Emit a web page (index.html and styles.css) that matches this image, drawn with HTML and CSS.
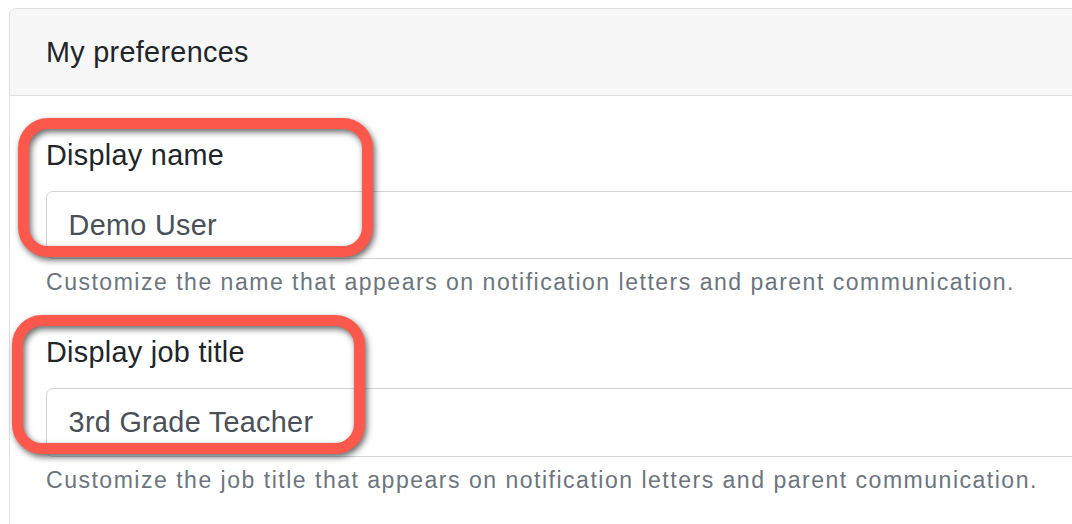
FILE: index.html
```html
<!DOCTYPE html>
<html lang="en">
<head>
<meta charset="utf-8">
<title>My preferences</title>
<link rel="stylesheet" href="styles.css">
</head>
<body>
<div class="page">
  <div class="card">
    <div class="card-header">My preferences</div>
    <div class="card-body">
      <div class="form-group">
        <label class="form-label" for="name">Display name</label>
        <input class="form-control" id="name" type="text" value="Demo User">
        <small class="form-text">Customize the name that appears on notification letters and parent communication.</small>
      </div>
      <div class="form-group">
        <label class="form-label" for="title">Display job title</label>
        <input class="form-control" id="title" type="text" value="3rd Grade Teacher">
        <small class="form-text">Customize the job title that appears on notification letters and parent communication.</small>
      </div>
    </div>
  </div>
  <div class="highlight highlight-name"></div>
  <div class="highlight highlight-title"></div>
</div>
</body>
</html>
```

FILE: styles.css
```css
html, body {
  margin: 0;
  padding: 0;
  background: #ffffff;
  overflow: hidden;
}

.page {
  position: relative;
  padding: 8px 0 0 9px;
  font-family: "Liberation Sans", Arial, sans-serif;
  font-size: 28.8px;
  line-height: 1.5;
  letter-spacing: 0.3px;
  color: #212529;
}

.card {
  width: 1150px;
  border: 1px solid #dfdfdf;
  border-radius: 7px;
  background: #ffffff;
  overflow: hidden;
}

.card-header {
  background: #f7f7f7;
  border-bottom: 1px solid #dfdfdf;
  padding: 21.6px 36px;
  color: #212529;
}

.card-body {
  padding: 37.5px 36px 20px 36px;
}

.form-group {
  display: flex;
  flex-direction: column;
  margin-bottom: 31px;
}

.form-label {
  display: block;
  margin-bottom: 14px;
}

.form-control {
  display: block;
  box-sizing: border-box;
  width: 100%;
  height: 68.4px;
  margin: 0;
  padding: 10.8px 21.6px;
  font-family: inherit;
  font-size: 28.8px;
  line-height: 1.5;
  letter-spacing: 0.3px;
  color: #495057;
  background: #ffffff;
  border: 1px solid #ced4da;
  border-radius: 7px;
  outline: none;
}

.form-text {
  display: block;
  margin-top: 6px;
  font-size: 23.04px;
  letter-spacing: 1.5px;
  color: #6c757d;
}

.highlight {
  position: absolute;
  box-sizing: border-box;
  border: 11px solid #fc584b;
  border-radius: 30px;
  filter: drop-shadow(2px 3px 3px rgba(0, 0, 0, 0.6));
  pointer-events: none;
}

.highlight-name {
  left: 18px;
  top: 118px;
  width: 355px;
  height: 139px;
}

.highlight-title {
  left: 12px;
  top: 315px;
  width: 353px;
  height: 139px;
}
```
